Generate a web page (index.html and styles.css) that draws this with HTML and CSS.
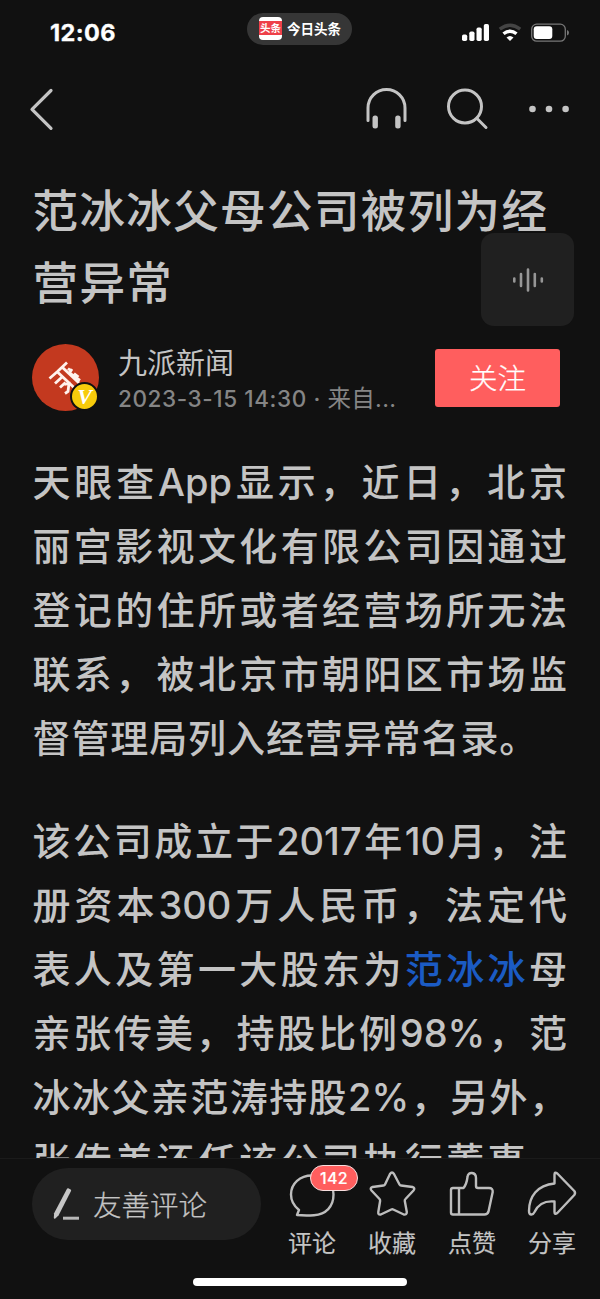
FILE: index.html
```html
<!DOCTYPE html>
<html lang="zh-CN">
<head>
<meta charset="utf-8">
<title>今日头条</title>
<link rel="stylesheet" href="styles.css">
</head>
<body>
<div class="screen">
  <header class="status">
    <div class="time">12:06</div>
    <div class="island"><span class="app-icon"><span>头条</span></span><span>今日头条</span></div>
    <svg class="indicators" width="110" height="22" viewBox="460 22 110 22">
      <g fill="#fff">
        <rect x="462" y="34.5" width="5.2" height="6.5" rx="1.7"/>
        <rect x="469.300" y="31.500" width="5.2" height="9.500" rx="1.7"/>
        <rect x="476.500" y="27.500" width="5.2" height="13.500" rx="1.7"/>
        <rect x="483.800" y="24" width="5.2" height="17" rx="1.7"/>
        <path d="M510 41l-3.500-3.500q3.500-3 7 0z"/>
      </g>
      <path d="M499.800 29.200q10.200-7.800 20.400 0" fill="none" stroke="#444" stroke-width="3.400"/>
      <path d="M503.500 33.800q6.500-5.300 13 0" fill="none" stroke="#fff" stroke-width="3.400"/>
      <rect x="531.700" y="24.200" width="33.600" height="17" rx="5" fill="none" stroke="#777" stroke-width="1.300"/>
      <rect x="533.700" y="26.300" width="18.600" height="12.800" rx="3" fill="#fff"/>
      <path d="M567 30q2 .7 2 2.700t-2 2.700z" fill="#777"/>
    </svg>
  </header>

  <nav class="toolbar">
    <svg width="26" height="44" viewBox="28 87 26 44"><path d="M51 90.500L32 109.300l19 19" class="line bold"/></svg>
    <svg width="208" height="44" viewBox="364 87 208 44">
      <path d="M368 120.500V108a18.500 18.500 0 0 1 37 0v12.500" class="line"/>
      <rect x="372.500" y="115.500" width="5.400" height="13" rx="2.500" class="solid"/>
      <rect x="395.200" y="115.500" width="5.400" height="13" rx="2.500" class="solid"/>
      <circle cx="465" cy="106.500" r="16.500" class="line"/>
      <path d="M477 118.500l9 9" class="line"/>
      <circle cx="532.500" cy="109" r="3.300" class="solid"/><circle cx="549" cy="109" r="3.300" class="solid"/><circle cx="565.600" cy="109" r="3.300" class="solid"/>
    </svg>
  </nav>

  <main class="article">
    <h1><span>范冰冰父母公司被列为经</span><span>营异常</span></h1>
    <div class="audio">
      <svg width="34" height="26" viewBox="0 0 34 26"><path d="M3.300 11.500v3M10 7v12M17 2.500v21M23.800 7v12M30.800 11.500v3" fill="none" stroke="#969696" stroke-width="2.600" stroke-linecap="round"/></svg>
    </div>
    <section class="author">
      <div class="avatar">
        <svg width="67" height="67" viewBox="0 0 67 67">
          <circle cx="33.500" cy="33.500" r="33.500" fill="#c3391f"/>
          <path d="M25.500 27.500L35 18.500M30 23l17 16M26 28.500l17 16M17.500 34.500l8-7M23 39.500l6.500-6M28 43.500l5.500-5M32.500 40.500l4.500-1-1 8-3 2M36 24.500l2.500 2M40 25l-2.500 4 10.500 7.500M42 29.500l4.500 3.500" fill="none" stroke="#fff2ed" stroke-width="2.800"/>
        </svg>
        <span class="verified">V</span>
      </div>
      <div class="meta"><div class="name">九派新闻</div><div class="date">2023-3-15 14:30 · <i>来自...</i></div></div>
      <div class="follow">关注</div>
    </section>
    <div class="body">
      <p><span>天眼查<b>App</b>显示，近日，北京</span><span>丽宫影视文化有限公司因通过</span><span>登记的住所或者经营场所无法</span><span>联系，被北京市朝阳区市场监</span><span class="last">督管理局列入经营异常名录。</span></p>
      <p><span>该公司成立于<b>2017</b>年<b>10</b>月，注</span><span>册资本<b>300</b>万人民币，法定代</span><span>表人及第一大股东为<a>范冰冰</a>母</span><span>亲张传美，持股比例<b>98%</b>，范</span><span>冰冰父亲范涛持股<b>2%</b>，另外，</span><span>张传美还任该公司执行董事、</span></p>
    </div>
  </main>

  <footer class="bottom">
    <div class="comment-box">
      <svg width="28" height="34" viewBox="52 1187 28 34"><path d="M67 1188.700q.5-.8 1.300-.4l2.300 1.200q.8.500.4 1.400l-12.500 24.600-3.200 3q-1.300.8-1.500-.8l.3-4.500z" fill="#c6c6c6"/><path d="M63 1218.200h16" stroke="#b8b8b8" stroke-width="3"/></svg>
      <span>友善评论</span>
    </div>
    <div class="actions">
      <div class="action">
        <svg width="56" height="48" viewBox="284 1170 56 48"><path d="M312 1175.500c-12 0-21 8-21 19 0 7 3 11.500 8 15.500l-2 5c5 .5 10 .7 17 .2 12-1 19.500-8.500 19.500-20.700 0-11-9-19-21.500-19z" class="line"/></svg>
        <span>评论</span><b class="badge">142</b>
      </div>
      <div class="action">
        <svg width="56" height="48" viewBox="364 1170 56 48"><path d="M390 1174q2-3 4 0l5.500 10.500q.5 1 1.500 1l11.500 1.500q3 1 1 3.500l-8 8.500q-1 1-.7 2l2 11q0 3-3 2.500l-10.500-5q-1-.5-2 0l-10.500 5q-3 .5-2.500-2.500l1.800-11q.2-1-.6-2l-8-8.500q-2-2.500 1-3.500l11-1.500q1 0 1.500-1z" class="line"/></svg>
        <span>收藏</span>
      </div>
      <div class="action">
        <svg width="56" height="48" viewBox="444 1170 56 48"><path d="M453 1188h10.500c2.500-3 3.500-7 4-11 .5-6 8.500-5 8.500 1v8q0 2 2 2h11q4 0 3.700 4l-4.200 19.500q-1 3-4 3h-31.500q-2 0-2-2V1190q0-2 2-2zM459 1188v26.500" class="line"/></svg>
        <span>点赞</span>
      </div>
      <div class="action">
        <svg width="56" height="48" viewBox="524 1170 56 48"><path d="M554.500 1174.500q0-3 2.800-1l17 17.500q1.500 2 0 4l-17 18q-2.800 2-2.800-1v-10.500c-10-1-16 2-20 10.500-2 4-5.500 3-5.500-1 0-14 8-26 25.500-27.500z" class="line"/></svg>
        <span>分享</span>
      </div>
    </div>
    <div class="home"></div>
  </footer>
</div>
</body>
</html>
```
FILE: styles.css
```css
* { box-sizing: border-box; }
body { margin: 0; background: #111; color: #c4c4c4; font-family: Inter, "Noto Sans CJK SC", sans-serif; text-spacing-trim: space-all; }
.screen { width: 600px; height: 1299px; display: flex; flex-direction: column; overflow: hidden; }
svg { display: block; flex: none; }
.line { fill: none; stroke: #bdbdbd; stroke-width: 2.4; stroke-linecap: round; stroke-linejoin: round; }
.toolbar .line { stroke: #c4c4c4; stroke-width: 3; }
.toolbar .bold { stroke-width: 3.2; }
.solid { fill: #c4c4c4; }

.status { height: 66px; flex: none; display: grid; grid-template-columns: 197px 1fr 110px; padding: 0 30px 0 50px; align-items: center; }
.time { color: #fff; font-size: 23.5px; line-height: 28px; margin-top: -1px; font-weight: 700; letter-spacing: .4px; -webkit-text-stroke: .3px #fff; }
.island { width: 105px; height: 32px; margin-top: -9px; border-radius: 16px; background: #363636; color: #fff; display: flex; align-items: center; gap: 5px; padding-left: 12px; font-size: 13.5px; line-height: 20px; font-weight: 700; white-space: nowrap; }
.app-icon { width: 23px; height: 23px; border-radius: 4px; background: linear-gradient(#fff 4px, #ee4049 4px 18px, #fff 18px); display: flex; align-items: center; justify-content: center; font-size: 10.5px; }

.toolbar { height: 110px; flex: none; display: flex; justify-content: space-between; padding: 21px 28px 0; }

.article { height: 982px; flex: none; overflow: hidden; }
h1 { margin: 0; padding-left: 32.5px; font-size: 45.5px; line-height: 72px; font-weight: 500; letter-spacing: 1.4px; }
h1 span { display: block; white-space: nowrap; }
.audio { width: 93px; height: 93px; margin: -87px 26px 0 auto; border-radius: 13px; background: #202020; display: flex; align-items: center; justify-content: center; }
.author { display: flex; height: 67px; margin: 18px 40px 0 32px; }
.avatar { width: 67px; position: relative; }
.verified { position: absolute; left: 38px; top: 38px; width: 29px; height: 29px; border: 2px solid #111; border-radius: 50%; background: #f7cb0b; color: #fff; font: italic 700 22px/25px "Liberation Serif", serif; text-align: center; }
.meta { margin-left: 19px; padding-top: 2px; flex: 1; white-space: nowrap; }
.name { font-size: 29px; line-height: 36px; }
.date { font-size: 22.5px; line-height: 34px; color: #858585; font-weight: 450; letter-spacing: .6px; }
.date i { font-style: normal; font-weight: 400; font-size: 23.5px; letter-spacing: .3px; }
.follow { width: 125px; height: 58px; margin-top: 5px; padding-top: 1px; border-radius: 3px; background: #ff5e5e; color: #fff; font-size: 28.500px; font-weight: 300; line-height: 58px; text-align: center; -webkit-text-stroke: .25px #fff; }

.body { margin: 39px 33px 0 32.5px; font-size: 38px; line-height: 64px; font-weight: 500; }
.body p { margin: 0 0 39px; }
.body span { display: block; height: 64px; white-space: nowrap; text-align: justify; text-align-last: justify; }
.body b { font-weight: 550; font-size: 38px; }
.body .last { text-align-last: left; letter-spacing: .9px; }
.body a { color: #1b5bc4; }

.bottom { height: 141px; flex: none; border-top: 1px solid #1b1b1b; display: grid; grid-template-columns: 229px 320px; column-gap: 11px; grid-template-rows: 119px 8px; padding-left: 32px; }
.comment-box { height: 72px; margin-top: 9px; border-radius: 36px; background: #202020; display: flex; align-items: center; gap: 13px; padding-left: 20px; font-size: 28.500px; line-height: 36px; font-weight: 300; -webkit-text-stroke: .25px; }
.comment-box span { padding-top: 3px; }
.actions { display: grid; grid-template-columns: repeat(4, 80px); padding-top: 11px; }
.action { position: relative; display: flex; flex-direction: column; align-items: center; font-size: 24px; line-height: 52px; -webkit-text-stroke: .15px; }
.badge { position: absolute; left: 38px; top: -5px; width: 48px; height: 26px; border: 1.500px solid #f6dede; border-radius: 13px; background: #ff5e5e; color: #fff; font-size: 16px; line-height: 24px; font-weight: 500; text-align: center; letter-spacing: .4px; }
.home { width: 214px; height: 8px; margin-left: 161px; border-radius: 4px; background: #fff; }
```
